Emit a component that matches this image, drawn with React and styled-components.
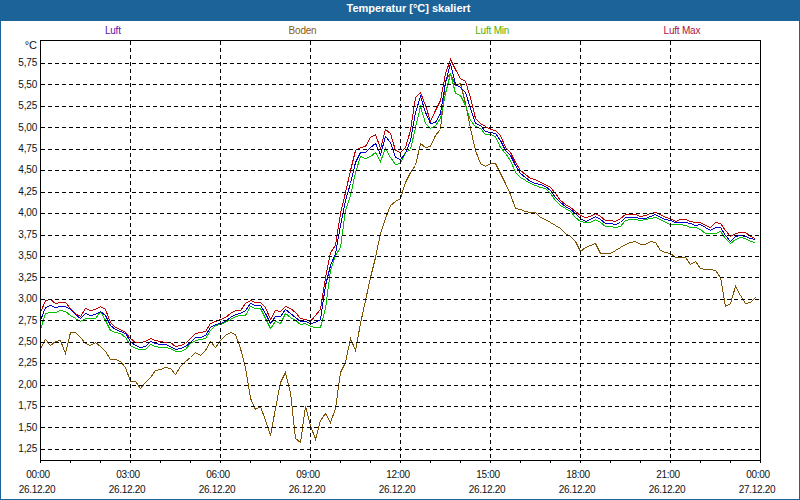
import React from "react";
import styled, { createGlobalStyle } from "styled-components";

const GlobalStyle = createGlobalStyle`
  html, body {
    margin: 0;
    padding: 0;
    background: #fff;
    overflow: hidden;
  }
`;

const Window = styled.div`
  box-sizing: border-box;
  width: 800px;
  height: 500px;
  display: flex;
  flex-direction: column;
  background: #fff;
  border: 1px solid #1c6399;
  border-top: 0;
  font-family: "Liberation Sans", Arial, sans-serif;
  font-size: 10px;
  color: #0a1420;
`;

const TitleBar = styled.div`
  height: 21px;
  margin: 0 -1px;
  flex: none;
  background: #1c6399;
  color: #fff;
  font-size: 11px;
  font-weight: bold;
  line-height: 17px;
  text-align: center;
  padding-left: 17px;
`;

const Legend = styled.div`
  height: 19px;
  flex: none;
  display: grid;
  grid-template-columns: repeat(4, 189.7px);
  padding-left: 17px;
  align-items: center;
`;

const LegendItem = styled.div`
  text-align: center;
  color: ${({ color }) => color};
  line-height: 19px;
  letter-spacing: -0.2px;
`;

const ChartRow = styled.div`
  display: flex;
  height: 424px;
  flex: none;
`;

const YAxis = styled.div`
  width: 39px;
  flex: none;
  display: flex;
  flex-direction: column;
`;

const Unit = styled.div`
  height: 12.3px;
  padding-right: 3px;
  text-align: right;
  line-height: 10px;
  font-size: 11px;
`;

const YLabel = styled.div`
  height: 21.44px;
  line-height: 21.44px;
  padding-right: 3px;
  text-align: right;
  letter-spacing: -0.2px;
`;

const XAxis = styled.div`
  display: grid;
  grid-template-columns: repeat(9, 72px);
  column-gap: 18px;
  padding-top: 3px;
`;

const XLabel = styled.div`
  text-align: center;
  line-height: 15px;
  letter-spacing: -0.3px;
`;

const XTime = styled.div`
  padding-left: 2px;
`;

const luft = [320,307,305,307,306,306,309,314,318,313,315,314,311,315,325,329,331,333,341,345,347,346,341,343,344,344,346,349,348,346,342,337,337,335,327,324,323,321,317,314,313,310,303,305,305,313,323,316,316,309,313,317,321,321,323,322,319,285,265,253,225,200,183,162,152,152,147,143,154,136,142,157,159,153,140,112,96,112,123,122,113,82,63,84,87,92,108,123,125,131,132,133,140,150,155,165,173,177,181,183,184,186,190,197,202,206,209,213,218,221,219,216,219,223,223,224,222,217,217,217,218,218,216,214,217,219,220,222,222,222,223,225,224,227,230,227,227,235,241,236,235,236,238,239];

const luftMax = [312,300,299,303,302,302,308,313,316,308,310,309,306,309,322,327,329,332,338,342,342,341,338,340,341,342,342,346,345,343,338,333,332,331,323,321,319,317,313,310,310,303,300,302,302,307,319,310,311,306,308,312,318,319,321,315,309,277,252,245,213,192,170,150,147,146,137,134,148,129,133,150,152,147,130,97,92,105,121,110,100,73,59,69,78,81,97,118,123,126,129,130,135,147,152,162,170,174,178,179,182,184,187,193,200,204,207,211,215,217,216,213,216,220,220,221,218,214,214,214,216,215,213,212,214,217,218,221,219,219,221,222,222,225,227,222,223,230,236,233,232,232,236,238];

const luftMin = [329,313,312,312,310,311,315,318,321,318,318,318,311,320,330,332,333,337,345,348,349,349,344,346,347,347,348,351,351,349,343,340,339,338,330,325,324,322,319,316,315,315,306,308,308,318,328,321,323,313,317,320,324,323,326,327,327,308,270,255,247,210,195,172,156,158,156,152,161,148,157,164,163,152,149,127,106,123,128,125,118,93,73,93,95,105,120,126,128,134,134,136,147,153,160,172,177,180,183,185,187,188,193,200,205,208,211,217,221,222,222,219,222,226,226,227,226,220,219,219,220,219,218,217,219,222,224,224,224,225,227,227,229,233,233,233,231,238,243,239,237,238,241,242];

const boden = [348,339,345,341,340,353,332,332,337,343,345,342,346,351,359,359,361,367,381,381,388,382,377,370,369,367,368,374,366,361,357,352,355,350,341,347,340,335,332,334,348,367,398,409,406,420,435,408,382,372,392,438,442,406,425,439,420,413,422,408,372,362,338,350,323,300,277,257,233,218,205,201,198,182,172,165,143,147,146,135,129,80,73,85,83,103,128,150,163,166,163,163,173,183,194,208,209,211,212,212,217,219,222,225,228,233,236,241,251,247,245,243,253,253,253,250,247,244,242,241,244,244,241,242,250,252,253,257,257,257,264,261,268,269,269,270,277,306,303,286,295,303,302,297];

const SERIES = [
  { data: boden, color: "#7f5000" },
  { data: luftMin, color: "#00c000" },
  { data: luftMax, color: "#c00000" },
  { data: luft, color: "#0000d0" },
];

const TICKS = ["5,75","5,50","5,25","5,00","4,75","4,50","4,25","4,00","3,75","3,50","3,25","3,00","2,75","2,50","2,25","2,00","1,75","1,50","1,25"];

const TIMES = [
  ["00:00", "26.12.20"],
  ["03:00", "26.12.20"],
  ["06:00", "26.12.20"],
  ["09:00", "26.12.20"],
  ["12:00", "26.12.20"],
  ["15:00", "26.12.20"],
  ["18:00", "26.12.20"],
  ["21:00", "26.12.20"],
  ["00:00", "27.12.20"],
];

const points = (data) =>
  data.map((y, i) => `${40 + i * 5 + 0.5},${y + 0.5}`).join(" ");

const gridY = TICKS.map((_, i) => Math.round(63 + i * 21.44));

const Plot = () => (
  <svg width="722" height="424" viewBox="40 40 722 424" shapeRendering="crispEdges">
    {SERIES.map(({ data, color }) => (
      <polyline key={color} points={points(data)} fill="none" stroke={color} strokeWidth="1" />
    ))}
    <g stroke="#000" strokeWidth="1" strokeDasharray="4 3">
      {gridY.map((y) => (
        <line key={y} x1="41" x2="760" y1={y + 0.5} y2={y + 0.5} />
      ))}
      {[130, 220, 310, 400, 490, 580, 670].map((x) => (
        <line key={x} x1={x + 0.5} x2={x + 0.5} y1="41" y2="460" />
      ))}
    </g>
    <rect x="40.5" y="40.5" width="720" height="420" fill="none" stroke="#000" strokeWidth="1" />
    <g stroke="#000" strokeWidth="1">
      {Array.from({ length: 25 }, (_, i) => 40 + i * 30).map((x) => (
        <line key={x} x1={x + 0.5} x2={x + 0.5} y1="460" y2="463" />
      ))}
    </g>
  </svg>
);

export default function App() {
  return (
    <Window>
      <GlobalStyle />
      <TitleBar>Temperatur [°C] skaliert</TitleBar>
      <Legend>
        <LegendItem color="#5a10b0">Luft</LegendItem>
        <LegendItem color="#8a5a10">Boden</LegendItem>
        <LegendItem color="#50b000">Luft Min</LegendItem>
        <LegendItem color="#b01040">Luft Max</LegendItem>
      </Legend>
      <ChartRow>
        <YAxis>
          <Unit>°C</Unit>
          {TICKS.map((t) => (
            <YLabel key={t}>{t}</YLabel>
          ))}
        </YAxis>
        <Plot />
      </ChartRow>
      <XAxis>
        {TIMES.map(([time, date], i) => (
          <XLabel key={i}>
            <XTime>{time}</XTime>
            {date}
          </XLabel>
        ))}
      </XAxis>
    </Window>
  );
}
